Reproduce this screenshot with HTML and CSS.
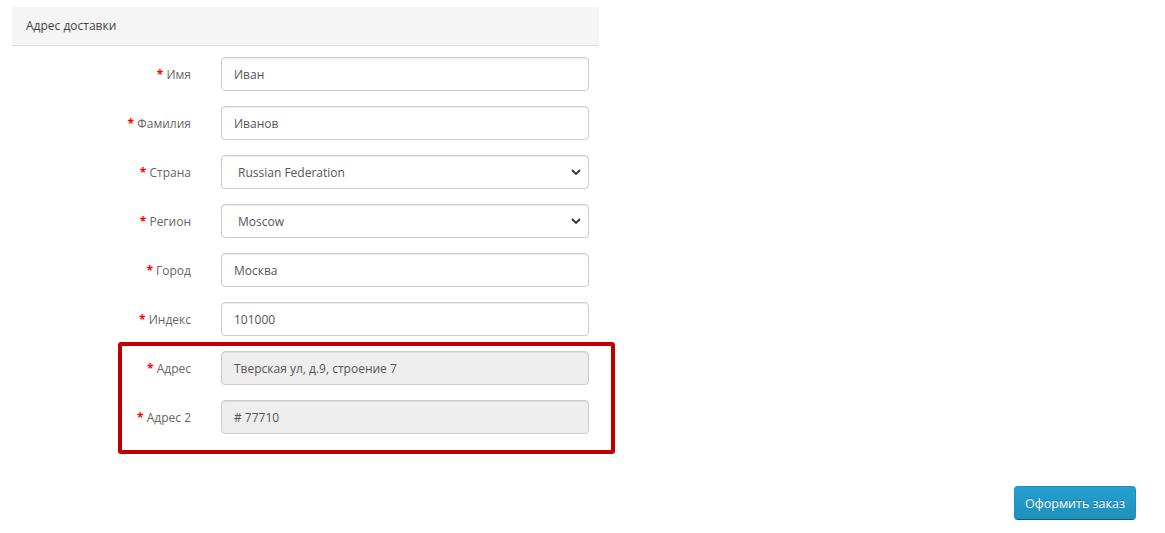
FILE: index.html
```html
<!DOCTYPE html>
<html lang="ru">
<head>
<meta charset="utf-8">
<link rel="stylesheet" href="styles.css">
</head>
<body>
<div class="page">
  <div class="panel">
    <div class="panel-heading">Адрес доставки</div>
    <div class="form">
      <div class="row"><label class="lbl"><span class="req">*</span> Имя</label><div class="field"><input class="ctl" value="Иван"></div></div>
      <div class="row"><label class="lbl"><span class="req">*</span> Фамилия</label><div class="field"><input class="ctl" value="Иванов"></div></div>
      <div class="row"><label class="lbl"><span class="req">*</span> Страна</label><div class="field"><div class="ctl sel">Russian Federation<svg class="chev" viewBox="0 0 10 6" width="10" height="6"><path d="M1 1l4 4 4-4" fill="none" stroke="#333" stroke-width="1.8"/></svg></div></div></div>
      <div class="row"><label class="lbl"><span class="req">*</span> Регион</label><div class="field"><div class="ctl sel">Moscow<svg class="chev" viewBox="0 0 10 6" width="10" height="6"><path d="M1 1l4 4 4-4" fill="none" stroke="#333" stroke-width="1.8"/></svg></div></div></div>
      <div class="row"><label class="lbl"><span class="req">*</span> Город</label><div class="field"><input class="ctl" value="Москва"></div></div>
      <div class="row"><label class="lbl"><span class="req">*</span> Индекс</label><div class="field"><input class="ctl" value="101000"></div></div>
      <div class="highlight-group">
        <div class="row"><label class="lbl"><span class="req">*</span> Адрес</label><div class="field"><input class="ctl ro" value="Тверская ул, д.9, строение 7" readonly></div></div>
        <div class="row"><label class="lbl"><span class="req">*</span> Адрес 2</label><div class="field"><input class="ctl ro" value="# 77710" readonly></div></div>
        <div class="redbox"></div>
      </div>
    </div>
  </div>
  <div class="actions"><button class="btn">Оформить заказ</button></div>
</div>
</body>
</html>
```
FILE: styles.css
```css
html, body { margin: 0; padding: 0; background: #fff; }
body { font-family: "Open Sans", "Liberation Sans", sans-serif; font-size: 12px; color: #666; }
.page { padding: 7px 29px 0 12px; }
.panel { width: 587px; }
.panel-heading {
  height: 38px; line-height: 38px; padding: 0 14px;
  background: #f5f5f5; border-bottom: 1px solid #ddd; color: #444;
}
.form { padding-top: 11px; display: flex; flex-direction: column; gap: 15px; }
.highlight-group { position: relative; display: flex; flex-direction: column; gap: 15px; }
.row { display: flex; align-items: center; height: 34px; }
.lbl { width: 179px; text-align: right; color: #666; }
.req { color: #f00; font-weight: bold; }
.field { margin-left: 30px; width: 368px; }
.ctl {
  box-sizing: border-box; width: 368px; height: 34px; margin: 0;
  border: 1px solid #ccc; border-radius: 4px; background: #fff;
  padding: 0 12px; font-family: inherit; font-size: 12px; color: #555;
  box-shadow: inset 0 1px 1px rgba(0,0,0,0.075); outline: none;
}
.sel { display: flex; align-items: center; justify-content: space-between; padding: 0 6px 0 16px; }
.chev { margin-right: 1px; }
.ro { background: #eee; }
.redbox {
  position: absolute; left: 106px; top: -9px; width: 497px; height: 112px;
  box-sizing: border-box; border: 4px solid #c00000; border-radius: 3px;
}
.actions { display: flex; justify-content: flex-end; margin-top: 52px; }
.btn {
  height: 34px; width: 122px; padding: 0; font-family: inherit; font-size: 12.5px; color: #fff;
  background: linear-gradient(to bottom, #23a1d1, #1f90bb);
  border: 1px solid #1f90bb; border-bottom-color: #145e7a; border-radius: 4px;
  text-shadow: 0 -1px 0 rgba(0,0,0,0.25);
}
```
